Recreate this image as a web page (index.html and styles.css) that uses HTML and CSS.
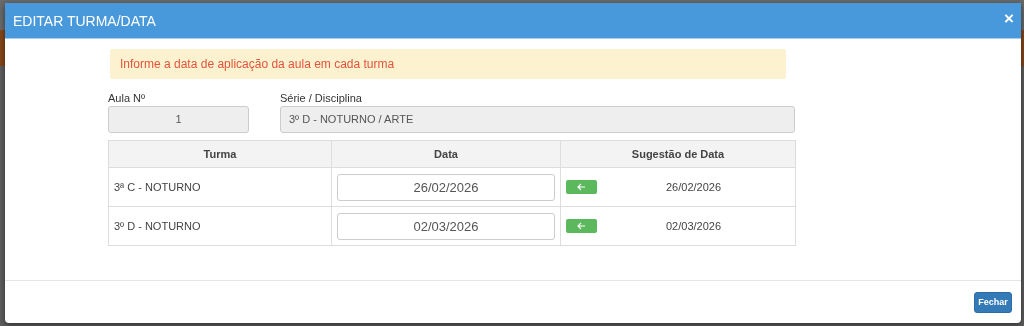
FILE: index.html
```html
<!doctype html>
<html>
<head>
    <meta charset="utf-8">
    <title>Editar Turma/Data</title>
    <link rel="stylesheet" href="styles.css">
</head>
<body>
<div class="page">
    <div class="page-top"></div>
    <div class="page-nav"></div>
    <div class="page-rest"></div>
</div>
<div class="backdrop">
    <div class="modal">
        <div class="modal-header">
            <h4 class="modal-title">EDITAR TURMA/DATA</h4>
            <span class="close">&times;</span>
        </div>
        <div class="modal-body">
            <div class="content">
                <div class="alert">Informe a data de aplicação da aula em cada turma</div>
                <div class="fields">
                    <div class="field field-aula">
                        <label>Aula Nº</label>
                        <div class="input readonly center">1</div>
                    </div>
                    <div class="field field-serie">
                        <label>Série / Disciplina</label>
                        <div class="input readonly">3º D - NOTURNO / ARTE</div>
                    </div>
                </div>
                <table class="grid">
                    <tr>
                        <th class="col-turma">Turma</th>
                        <th class="col-data">Data</th>
                        <th class="col-sugestao">Sugestão de Data</th>
                    </tr>
                    <tr>
                        <td>3ª C - NOTURNO</td>
                        <td><div class="input date">26/02/2026</div></td>
                        <td>
                            <div class="suggest">
                                <span class="btn-use"><svg width="9" height="8" viewBox="0 0 9 8"><path d="M4 1 1 4 4 7M1 4H8" fill="none" stroke="#fff" stroke-width="1.2"/></svg></span>
                                <span class="suggest-date">26/02/2026</span>
                            </div>
                        </td>
                    </tr>
                    <tr>
                        <td>3º D - NOTURNO</td>
                        <td><div class="input date">02/03/2026</div></td>
                        <td>
                            <div class="suggest">
                                <span class="btn-use"><svg width="9" height="8" viewBox="0 0 9 8"><path d="M4 1 1 4 4 7M1 4H8" fill="none" stroke="#fff" stroke-width="1.2"/></svg></span>
                                <span class="suggest-date">02/03/2026</span>
                            </div>
                        </td>
                    </tr>
                </table>
            </div>
        </div>
        <div class="modal-footer">
            <button class="btn-fechar">Fechar</button>
        </div>
    </div>
</div>
</body>
</html>
```

FILE: styles.css
```css
html, body {
    margin: 0;
    height: 100%;
    font-family: "Liberation Sans", Arial, sans-serif;
    color: #333;
}

.page {
    height: 100%;
    background-color: #5c5c5c;
}

.page-top {
    height: 30px;
    background-color: #6a6a6a;
}

.page-nav {
    height: 36px;
    background-color: #86461a;
}

.page-rest {
    height: 260px;
    background-color: #5e5e5e;
}

.backdrop {
    position: fixed;
    top: 0;
    left: 0;
    right: 0;
    bottom: 0;
}

.modal {
    position: absolute;
    top: 3px;
    left: 5px;
    width: 1016px;
    height: 320px;
    background-color: #fff;
    border-radius: 0 0 4px 4px;
    box-shadow: 0 2px 6px rgba(0, 0, 0, 0.5);
    display: flex;
    flex-direction: column;
}

.modal-header {
    height: 35px;
    background-color: #4899dc;
    display: flex;
    align-items: center;
    justify-content: space-between;
    padding: 0 7px 0 8px;
    border-bottom: 1px solid #a9cdee;
}

.modal-title {
    margin: 0;
    color: #fff;
    font-size: 14px;
    font-weight: normal;
    padding-top: 1px;
}

.close {
    color: #fff;
    font-size: 17px;
    font-weight: bold;
    line-height: 1;
    margin-top: -4px;
}

.modal-body {
    flex: 1;
    padding: 10px 0 0 103px;
}

.content {
    width: 688px;
}

.alert {
    margin: 0 10px 0 2px;
    height: 30px;
    line-height: 30px;
    padding-left: 10px;
    background-color: #fcf2cf;
    border-radius: 2px;
    color: #e4533c;
    font-size: 12px;
}

.fields {
    display: flex;
    gap: 31px;
    margin-top: 13px;
}

.field label {
    display: block;
    font-size: 11px;
    color: #333;
    height: 14px;
}

.field-aula {
    width: 141px;
}

.field-serie {
    width: 515px;
}

.input {
    box-sizing: border-box;
    height: 27px;
    line-height: 25px;
    border: 1px solid #ccc;
    border-radius: 3px;
    font-size: 11px;
    color: #555;
    padding: 0 8px;
}

.readonly {
    background-color: #eee;
}

.center {
    text-align: center;
}

.grid {
    margin-top: 7px;
    width: 688px;
    border-collapse: collapse;
    font-size: 11px;
}

.grid th, .grid td {
    border: 1px solid #ddd;
}

.grid th {
    height: 26px;
    background-color: #f3f3f3;
    font-weight: bold;
    color: #444;
    padding: 0;
}

.col-turma {
    width: 222px;
}

.col-data {
    width: 228px;
}

.grid td {
    height: 38px;
    padding: 0 5px;
    color: #444;
}

.date {
    background-color: #fff;
    font-size: 13px;
    color: #555;
    text-align: center;
}

.suggest {
    display: flex;
    align-items: center;
}

.btn-use {
    width: 31px;
    height: 14px;
    background-color: #5cb85c;
    border-radius: 2px;
    display: flex;
    align-items: center;
    justify-content: center;
}

.suggest-date {
    flex: 1;
    text-align: center;
    color: #444;
}

.modal-footer {
    height: 42px;
    border-top: 1px solid #e5e5e5;
    display: flex;
    align-items: center;
    justify-content: flex-end;
    padding-right: 9px;
}

.btn-fechar {
    width: 38px;
    height: 21px;
    padding: 0;
    background-color: #337ab7;
    border: 1px solid #2e6da4;
    border-radius: 3px;
    color: #fff;
    font-family: "Liberation Sans", Arial, sans-serif;
    font-size: 9px;
    font-weight: bold;
}
```
